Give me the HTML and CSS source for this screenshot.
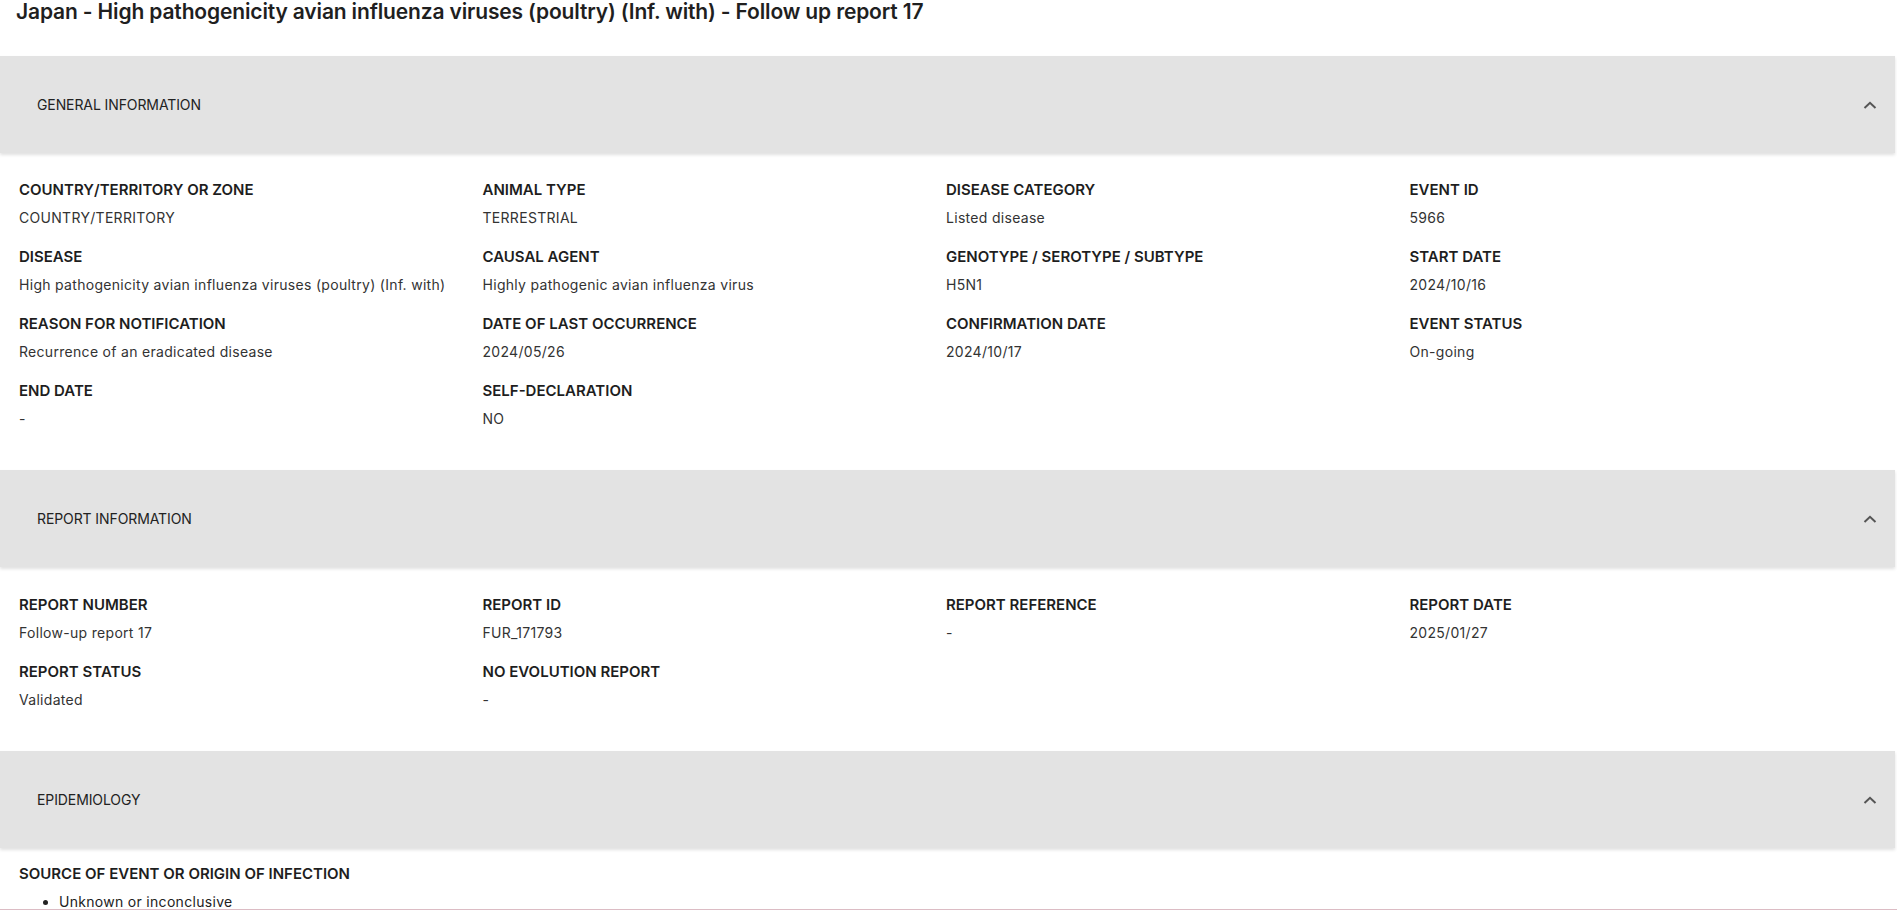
FILE: index.html
```html
<!DOCTYPE html>
<html lang="en">
<head>
<meta charset="utf-8">
<title>Japan - Follow up report 17</title>
<link rel="stylesheet" href="styles.css">
</head>
<body>
<h1 class="page-title">Japan - High pathogenicity avian influenza viruses (poultry) (Inf. with) - Follow up report 17</h1>

<section class="panel">
  <header class="panel-head">
    <span class="panel-title">GENERAL INFORMATION</span>
    <svg class="chevron" width="14" height="8" viewBox="0 0 14 8"><path d="M1.5 7 L7 1.8 L12.5 7" fill="none" stroke="#555" stroke-width="2"/></svg>
  </header>
  <div class="panel-body grid">
    <div class="field"><div class="label">COUNTRY/TERRITORY OR ZONE</div><div class="value">COUNTRY/TERRITORY</div></div>
    <div class="field"><div class="label">ANIMAL TYPE</div><div class="value">TERRESTRIAL</div></div>
    <div class="field"><div class="label">DISEASE CATEGORY</div><div class="value">Listed disease</div></div>
    <div class="field"><div class="label">EVENT ID</div><div class="value">5966</div></div>
    <div class="field"><div class="label">DISEASE</div><div class="value">High pathogenicity avian influenza viruses (poultry) (Inf. with)</div></div>
    <div class="field"><div class="label">CAUSAL AGENT</div><div class="value">Highly pathogenic avian influenza virus</div></div>
    <div class="field"><div class="label">GENOTYPE / SEROTYPE / SUBTYPE</div><div class="value">H5N1</div></div>
    <div class="field"><div class="label">START DATE</div><div class="value">2024/10/16</div></div>
    <div class="field"><div class="label">REASON FOR NOTIFICATION</div><div class="value">Recurrence of an eradicated disease</div></div>
    <div class="field"><div class="label">DATE OF LAST OCCURRENCE</div><div class="value">2024/05/26</div></div>
    <div class="field"><div class="label">CONFIRMATION DATE</div><div class="value">2024/10/17</div></div>
    <div class="field"><div class="label">EVENT STATUS</div><div class="value">On-going</div></div>
    <div class="field"><div class="label">END DATE</div><div class="value">-</div></div>
    <div class="field"><div class="label">SELF-DECLARATION</div><div class="value">NO</div></div>
  </div>
</section>

<section class="panel">
  <header class="panel-head">
    <span class="panel-title">REPORT INFORMATION</span>
    <svg class="chevron" width="14" height="8" viewBox="0 0 14 8"><path d="M1.5 7 L7 1.8 L12.5 7" fill="none" stroke="#555" stroke-width="2"/></svg>
  </header>
  <div class="panel-body grid report">
    <div class="field"><div class="label">REPORT NUMBER</div><div class="value">Follow-up report 17</div></div>
    <div class="field"><div class="label">REPORT ID</div><div class="value">FUR_171793</div></div>
    <div class="field"><div class="label">REPORT REFERENCE</div><div class="value">-</div></div>
    <div class="field"><div class="label">REPORT DATE</div><div class="value">2025/01/27</div></div>
    <div class="field"><div class="label">REPORT STATUS</div><div class="value">Validated</div></div>
    <div class="field"><div class="label">NO EVOLUTION REPORT</div><div class="value">-</div></div>
  </div>
</section>

<section class="panel">
  <header class="panel-head">
    <span class="panel-title">EPIDEMIOLOGY</span>
    <svg class="chevron" width="14" height="8" viewBox="0 0 14 8"><path d="M1.5 7 L7 1.8 L12.5 7" fill="none" stroke="#555" stroke-width="2"/></svg>
  </header>
  <div class="panel-body epi">
    <div class="label">SOURCE OF EVENT OR ORIGIN OF INFECTION</div>
    <ul class="source-list">
      <li>Unknown or inconclusive</li>
    </ul>
  </div>
</section>

<!-- thin edge of the fixed bar docked at the bottom of the viewport -->
<div class="bottom-edge"></div>
</body>
</html>
```

FILE: styles.css
```css
html, body {
  margin: 0;
  padding: 0;
  background: #fff;
}

body {
  font-family: "Inter", "Open Sans", sans-serif;
  color: #222;
  overflow: hidden;
}

.page-title {
  margin: 0 0 32px;
  padding-left: 16px;
  font-size: 21px;
  line-height: 24px;
  font-weight: 600;
  color: #1f1f1f;
  letter-spacing: -0.15px;
}

.panel-head {
  width: 1895px;
  height: 97px;
  box-sizing: border-box;
  padding: 0 18px 0 37px;
  display: flex;
  align-items: center;
  justify-content: space-between;
  background: #e3e3e3;
  box-shadow: 0 2px 3px rgba(0, 0, 0, 0.12);
  position: relative;
}

.panel-title {
  font-size: 14px;
  font-weight: 400;
  color: #222;
  letter-spacing: -0.1px;
}

.chevron {
  display: block;
}

.panel-body {
  padding: 27px 0 22px 19px;
}

.panel-body.report {
  padding-top: 28px;
  padding-bottom: 22px;
}

.grid {
  display: grid;
  grid-template-columns: repeat(4, 463.5px);
}

.field {
  margin-bottom: 19px;
}

.label {
  font-size: 15px;
  line-height: 20px;
  font-weight: 600;
  color: #1e1e1e;
  margin-bottom: 8px;
  letter-spacing: 0;
}

.value {
  font-size: 14px;
  line-height: 20px;
  font-weight: 400;
  color: #333;
  letter-spacing: 0.3px;
}

.epi {
  padding-top: 16px;
  padding-bottom: 0;
}

.source-list {
  margin: 0;
  padding-left: 40px;
  font-size: 14px;
  line-height: 20px;
  color: #222;
  letter-spacing: 0.3px;
}

.bottom-edge {
  position: fixed;
  left: 0;
  right: 0;
  bottom: 0;
  height: 1px;
  background: #dcbcc4;
}
```
